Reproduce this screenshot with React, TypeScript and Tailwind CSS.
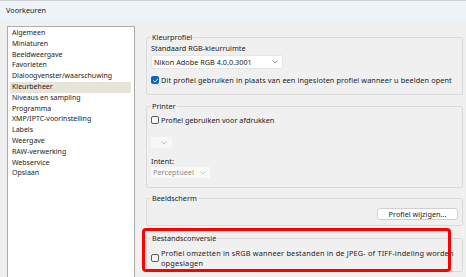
import React from "react";

const items = [
  "Algemeen",
  "Miniaturen",
  "Beeldweergave",
  "Favorieten",
  "Dialoogvenster/waarschuwing",
  "Kleurbeheer",
  "Niveaus en sampling",
  "Programma",
  "XMP/IPTC-voorinstelling",
  "Labels",
  "Weergave",
  "RAW-verwerking",
  "Webservice",
  "Opslaan",
];

function Chevron({ color = "#7a7a7a" }: { color?: string }) {
  return (
    <svg width="6" height="4" viewBox="0 0 6 4" className="shrink-0">
      <polyline points="0.5,0.5 3,3 5.5,0.5" fill="none" stroke={color} strokeWidth="0.8" />
    </svg>
  );
}

function Checkbox({ checked }: { checked?: boolean }) {
  if (checked) {
    return (
      <div className="w-[8px] h-[8px] shrink-0 rounded-[2px] bg-[#0a64c2] flex items-center justify-center">
        <svg width="7" height="7" viewBox="0 0 8 8">
          <polyline points="1.6,4.2 3.3,5.8 6.5,2.3" fill="none" stroke="#ffffff" strokeWidth="1.1" />
        </svg>
      </div>
    );
  }
  return <div className="w-[8px] h-[8px] shrink-0 rounded-[2px] border border-[#5c5c5c] bg-[#f7f7f7]" />;
}

function Group({
  title,
  className = "",
  children,
}: {
  title: string;
  className?: string;
  children: React.ReactNode;
}) {
  return (
    <fieldset className={`border border-[#dadada] rounded-[2px] px-[4px] ${className}`}>
      <legend className="px-[1px] leading-[11px]">{title}</legend>
      {children}
    </fieldset>
  );
}

export default function App() {
  return (
    <div className="relative w-[466px] h-[277px] overflow-hidden bg-[#f0f0f0] text-[7.3px] text-[#1b1b1b] font-['Noto_Sans',Arial,sans-serif]">
      <div className="h-[22px] border-t border-[#cfcfcf] bg-[#eef2f9] pl-[6px] pt-[4px] leading-[10px] text-[7.3px]">
        Voorkeuren
      </div>
      <div className="flex">
        <div className="ml-[7px] mt-[4px] w-[128px] h-[260px] bg-white border border-[#acacac] pt-[1px] pl-[2px] pr-[3px] text-[7px]">
          {items.map((t) => (
            <div
              key={t}
              className={`h-[10.8px] leading-[10.8px] px-[2px] whitespace-nowrap ${
                t === "Kleurbeheer" ? "bg-[#e5e3da]" : ""
              }`}
            >
              {t}
            </div>
          ))}
        </div>
        <div className="ml-[11px] w-[317px] pt-[10px]">
          <Group title="Kleurprofiel" className="pb-[9px]">
            <div className="leading-[10px]">Standaard RGB-kleurruimte</div>
            <div className="mt-[2px] w-[132px] h-[14px] bg-white border border-[#e6e6e6] rounded-[2px] flex items-center justify-between pl-[2px] pr-[4px]">
              <span>Nikon Adobe RGB 4.0.0.3001</span>
              <Chevron />
            </div>
            <div className="mt-[6px] h-[10px] flex items-center gap-[2px] whitespace-nowrap">
              <Checkbox checked />
              <span className="tracking-[0.1px]">
                Dit profiel gebruiken in plaats van een ingesloten profiel wanneer u beelden opent
              </span>
            </div>
          </Group>

          <Group title="Printer" className="mt-[6px] pb-[9px]">
            <div className="mt-[3px] h-[10px] flex items-center gap-[2px]">
              <Checkbox />
              <span>Profiel gebruiken voor afdrukken</span>
            </div>
            <div className="mt-[12px] w-[21px] h-[11px] bg-[#f7f7f7] flex items-center justify-end pr-[5px]">
              <Chevron color="#b5b5b5" />
            </div>
            <div className="mt-[8px] leading-[10px]">Intent:</div>
            <div className="mt-[1px] w-[59px] h-[11px] bg-[#f9f9f9] flex items-center justify-between pl-[2px] pr-[4px] text-[#8a8a8a]">
              <span>Perceptueel</span>
              <Chevron color="#b5b5b5" />
            </div>
          </Group>

          <Group title="Beeldscherm" className="mt-[5px] pb-[5px]">
            <div className="mt-[4px] flex justify-end">
              <div className="w-[81px] h-[12px] bg-white border border-[#d0d0d0] rounded-[3px] flex items-center justify-center">
                Profiel wijzigen...
              </div>
            </div>
          </Group>

          <Group title="Bestandsconversie" className="mt-[7px] pb-[3px]">
            <div className="mt-[4px] flex items-center gap-[2px]">
              <Checkbox />
              <div className="leading-[10px] whitespace-nowrap tracking-[0.2px]">
                Profiel omzetten in sRGB wanneer bestanden in de JPEG- of TIFF-indeling worden
                <br />
                opgeslagen
              </div>
            </div>
          </Group>
        </div>
      </div>
      <div className="absolute left-[142px] top-[228px] w-[309px] h-[44px] border-[3px] border-[#ff0000] rounded-[4px]" />
    </div>
  );
}
